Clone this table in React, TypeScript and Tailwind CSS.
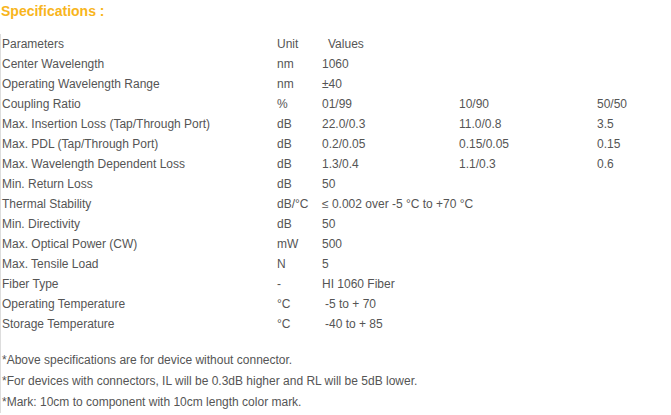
import React from "react";

const rows: [string, string, string, string?, string?][] = [
  ["Parameters", "Unit", "Values"],
  ["Center Wavelength", "nm", "1060"],
  ["Operating Wavelength Range", "nm", "±40"],
  ["Coupling Ratio", "%", "01/99", "10/90", "50/50"],
  ["Max. Insertion Loss (Tap/Through Port)", "dB", "22.0/0.3", "11.0/0.8", "3.5"],
  ["Max. PDL (Tap/Through Port)", "dB", "0.2/0.05", "0.15/0.05", "0.15"],
  ["Max. Wavelength Dependent Loss", "dB", "1.3/0.4", "1.1/0.3", "0.6"],
  ["Min. Return Loss", "dB", "50"],
  ["Thermal Stability", "dB/°C", "≤ 0.002 over -5 °C to +70 °C"],
  ["Min. Directivity", "dB", "50"],
  ["Max. Optical Power (CW)", "mW", "500"],
  ["Max. Tensile Load", "N", "5"],
  ["Fiber Type", "-", "HI 1060 Fiber"],
  ["Operating Temperature", "°C", "-5 to + 70"],
  ["Storage Temperature", "°C", "-40 to + 85"],
];

export default function App() {
  return (
    <div
      className="w-[671px] h-[415px] bg-white overflow-hidden text-[#555555]"
      style={{ fontFamily: '"Liberation Sans", Arial, sans-serif' }}
    >
      <div className="h-[22px] pt-[3px] pl-[1px] text-[14px] leading-[16px] font-bold text-[#f8b51c]">
        Specifications :
      </div>
      <div className="mt-[12px] border-l border-[#dddddd] text-[12px]">
        <div>
          {rows.map((r, i) => (
            <div key={i} className="grid grid-cols-[276px_45px_137px_138px_1fr] h-[20px] leading-[20px] whitespace-nowrap">
              <div className="pl-[1px]">{r[0]}</div>
              <div>{r[1]}</div>
              <div className={i === 0 ? "pl-[6px]" : i >= 13 ? "pl-[3px]" : ""}>{r[2]}</div>
              <div>{r[3] ?? ""}</div>
              <div>{r[4] ?? ""}</div>
            </div>
          ))}
        </div>
        <div className="pt-[16px] leading-[21px] pl-[1px]">
          <div>*Above specifications are for device without connector.</div>
          <div>*For devices with connectors, IL will be 0.3dB higher and RL will be 5dB lower.</div>
          <div>*Mark: 10cm to component with 10cm length color mark.</div>
        </div>
      </div>
    </div>
  );
}
